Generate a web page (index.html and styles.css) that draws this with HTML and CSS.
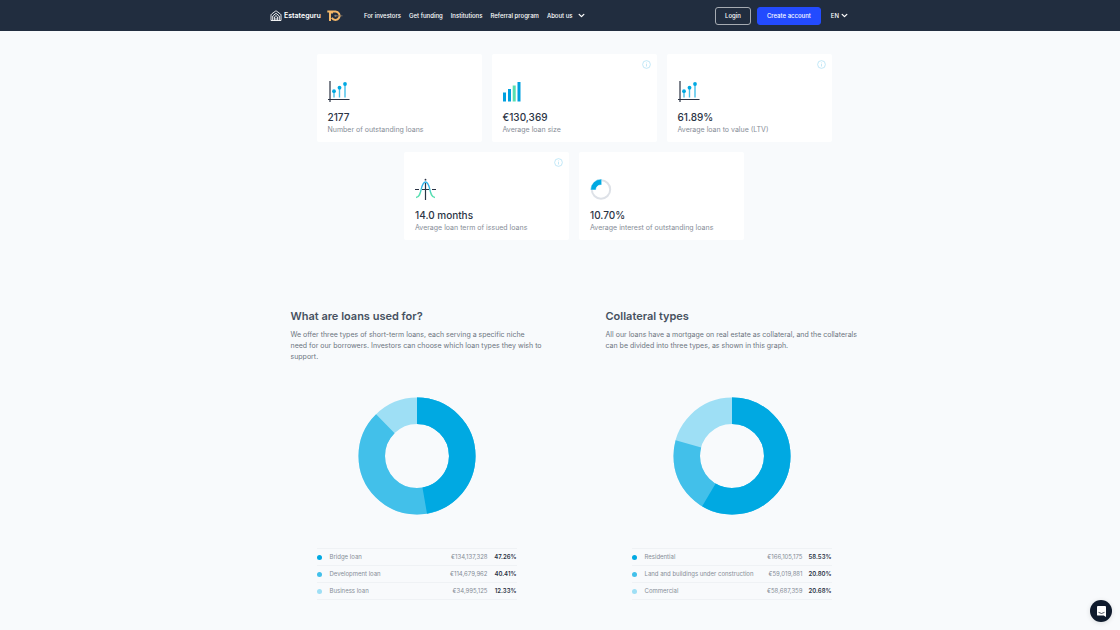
FILE: index.html
```html
<!DOCTYPE html>
<html lang="en">
<head>
<meta charset="utf-8">
<meta name="viewport" content="width=device-width, initial-scale=1">
<title>Estateguru statistics</title>
<link rel="stylesheet" href="styles.css">
</head>
<body>
<svg class="defs" aria-hidden="true">
  <symbol id="chevron" viewBox="0 0 6 6"><path d="M1 2 3 4 5 2" fill="none" stroke="currentColor" stroke-width="1.1" stroke-linecap="round" stroke-linejoin="round"/></symbol>
  <symbol id="info" viewBox="0 0 10 10"><g fill="none" stroke="#b5e3f5" stroke-width=".9"><circle cx="5" cy="5" r="4.3"/><path d="M5 4.500V7.200M5 2.800v.9"/></g></symbol>
  <symbol id="pins" viewBox="0 0 22 22"><path d="M2 1v21M0 19.500h21.500" stroke="#2b3445" stroke-width="1.200"/><path d="M6 12v5.500M11.500 8v9.500M17 5v12.500" stroke="#45c1ea" stroke-width="1.400"/><g fill="#00a9e2"><circle cx="6" cy="11.200" r="1.900"/><circle cx="11.500" cy="7.700" r="1.900"/><circle cx="17" cy="4" r="1.900"/></g></symbol>
</svg>
<header class="header">
  <div class="header-inner">
    <a class="brand" href="#" aria-label="Estateguru">
      <svg class="brand-house" viewBox="0 0 12 12"><g fill="none" stroke="#fff" stroke-width=".9" stroke-linejoin="round"><path d="M1 10.500V5.200Q1 4.500 1.600 4L5.400 1.200Q6 .8 6.600 1.200L10.400 4Q11 4.500 11 5.200V10.500Z"/><path d="M2.700 10.500V6L6 3.300 9.300 6V10.500M4.400 10.500V7L6 5.600 7.600 7v3.500M6 7.800V10.500"/></g></svg>
      <span>Estateguru</span>
      <svg class="brand-ten" viewBox="0 0 16 12"><g fill="none" stroke="#f5b869" stroke-width="2"><path d="M.3 1.500H3V11"/><path d="M5 3.400V1.500H8.500A4.200 4.200 0 1 1 4.800 7.800"/></g><path d="M7.500 5.800H15.500" stroke="#8b7a69" stroke-width=".8"/><circle cx="8.500" cy="5.800" r="1.100" fill="#8b7a69"/></svg>
    </a>
    <nav class="nav">
      <a href="#">For investors</a>
      <a href="#">Get funding</a>
      <a href="#">Institutions</a>
      <a href="#">Referral program</a>
      <a href="#">About us <svg class="chevron"><use href="#chevron"/></svg></a>
    </nav>
    <div class="account">
      <button class="button" type="button">Login</button>
      <button class="button button-primary" type="button">Create account</button>
      <button class="language" type="button">EN <svg class="chevron"><use href="#chevron"/></svg></button>
    </div>
  </div>
</header>

<main class="main">
  <section class="stats" aria-label="Key figures">
    <article class="card">
      <svg class="card-icon"><use href="#pins"/></svg>
      <strong class="card-value">2177</strong>
      <span class="card-label">Number of outstanding loans</span>
    </article>
    <article class="card">
      <button class="info" type="button" aria-label="More information"><svg><use href="#info"/></svg></button>
      <svg class="card-icon" viewBox="0 0 22 22"><path d="M0 12.500h3v9H0zM5 9h3v12.500H5zM14.500 2h3v19.500h-3z" fill="#00a0df"/><path d="M9.700 5.500h3v16h-3z" fill="#58dfb0"/></svg>
      <strong class="card-value">€130,369</strong>
      <span class="card-label">Average loan size</span>
    </article>
    <article class="card">
      <button class="info" type="button" aria-label="More information"><svg><use href="#info"/></svg></button>
      <svg class="card-icon"><use href="#pins"/></svg>
      <strong class="card-value">61.89%</strong>
      <span class="card-label">Average loan to value (LTV)</span>
    </article>
    <article class="card">
      <button class="info" type="button" aria-label="More information"><svg><use href="#info"/></svg></button>
      <svg class="card-icon" viewBox="0 0 22 22"><defs><linearGradient id="bell" x1="0" y1="0" x2="0" y2="1"><stop offset=".3" stop-color="#2fb2e8"/><stop offset=".75" stop-color="#58dfb0"/></linearGradient></defs><path d="M0 11.500h4M7 11.500h7M17 11.500h4M10.500 5v17" stroke="#2b3445" stroke-width="1.200"/><circle cx="10.500" cy="1.700" r=".9" fill="#2b3445"/><path d="M1 19.500C7.500 19.500 5 4 10.500 4S13.500 19.500 20 19.500" fill="none" stroke="url(#bell)" stroke-width="1.300"/></svg>
      <strong class="card-value">14.0 months</strong>
      <span class="card-label">Average loan term of issued loans</span>
    </article>
    <article class="card">
      <svg class="card-icon" viewBox="0 0 22 22"><circle cx="11" cy="11.500" r="9.200" fill="none" stroke="#dde1e7" stroke-width="2"/><path d="M.6 12V11.500A10.400 10.400 0 0 1 11 1.100h.7V7H11a4.600 4.600 0 0 0-5 5Z" fill="#00a9e2" stroke="#fff" stroke-width=".5"/></svg>
      <strong class="card-value">10.70%</strong>
      <span class="card-label">Average interest of outstanding loans</span>
    </article>
  </section>

  <div class="charts">
    <section class="chart">
      <h2>What are loans used for?</h2>
      <p>We offer three types of short-term loans, each serving a specific niche need&nbsp;for our borrowers. Investors can choose which loan types they wish to support.</p>
      <svg class="donut" viewBox="0 0 118 118" role="img" aria-label="Loans by purpose"><g fill="none" stroke-width="26.500" transform="rotate(-90 59 59)"><circle cx="59" cy="59" r="45.250" pathLength="100" stroke="#9edff5"/><circle cx="59" cy="59" r="45.250" pathLength="100" stroke="#42c0ea" stroke-dasharray="87.670 100"/><circle cx="59" cy="59" r="45.250" pathLength="100" stroke="#00a9e2" stroke-dasharray="47.260 100"/></g></svg>
      <table class="legend">
        <tr><td><i class="dot dot-dark"></i></td><th scope="row">Bridge loan</th><td>€134,137,328</td><td>47.26%</td></tr>
        <tr><td><i class="dot dot-mid"></i></td><th scope="row">Development loan</th><td>€114,679,962</td><td>40.41%</td></tr>
        <tr><td><i class="dot dot-light"></i></td><th scope="row">Business loan</th><td>€34,995,125</td><td>12.33%</td></tr>
      </table>
    </section>
    <section class="chart">
      <h2>Collateral types</h2>
      <p>All our loans have a mortgage on real estate as collateral, and the collaterals can be divided into three types, as shown in this graph.</p>
      <svg class="donut" viewBox="0 0 118 118" role="img" aria-label="Loans by collateral type"><g fill="none" stroke-width="26.500" transform="rotate(-90 59 59)"><circle cx="59" cy="59" r="45.250" pathLength="100" stroke="#9edff5"/><circle cx="59" cy="59" r="45.250" pathLength="100" stroke="#42c0ea" stroke-dasharray="79.330 100"/><circle cx="59" cy="59" r="45.250" pathLength="100" stroke="#00a9e2" stroke-dasharray="58.530 100"/></g></svg>
      <table class="legend">
        <tr><td><i class="dot dot-dark"></i></td><th scope="row">Residential</th><td>€166,105,175</td><td>58.53%</td></tr>
        <tr><td><i class="dot dot-mid"></i></td><th scope="row">Land and buildings under construction</th><td>€59,019,881</td><td>20.80%</td></tr>
        <tr><td><i class="dot dot-light"></i></td><th scope="row">Commercial</th><td>€58,687,359</td><td>20.68%</td></tr>
      </table>
    </section>
  </div>
</main>

<button class="chat" type="button" aria-label="Open chat"><svg viewBox="0 0 10 12"><path d="M1 0h8q1 0 1 1v11L7.500 10.500H1q-1 0-1-1V1Q0 0 1 0Z" fill="#fff"/><path d="M2 7.200Q5 9.500 8 7.200" fill="none" stroke="#0f1b2d" stroke-width=".8" stroke-linecap="round"/></svg></button>
</body>
</html>
```
FILE: styles.css
```css
* { box-sizing: border-box; }

body {
  margin: 0;
  background: #f8fafc;
  color: #6c757f;
  font: 6px/10px Inter, "Liberation Sans", sans-serif;
}

a { color: inherit; text-decoration: none; }
button { margin: 0; border: 0; padding: 0; background: none; color: inherit; font: inherit; cursor: pointer; }
svg { display: block; flex: none; }
.defs { position: absolute; width: 0; height: 0; }

.header { background: #212d3f; color: #fff; font-weight: 500; }
.header-inner { display: flex; align-items: center; max-width: 580px; height: 31px; margin: 0 auto; }
.brand { display: flex; align-items: center; gap: 2px; margin-right: 21px; font-size: 7px; font-weight: 600; }
.brand-house { width: 12px; height: 12px; }
.brand-ten { width: 16px; height: 12px; margin-left: 4px; }
.nav { display: flex; gap: 8px; }
.nav a, .language { display: flex; align-items: center; gap: 5px; white-space: nowrap; }
.chevron { width: 7px; height: 7px; }
.account { display: flex; align-items: center; gap: 6px; margin-left: auto; }
.button { height: 18px; padding: 0 9px; border: 1px solid #a6abb2; border-radius: 3px; }
.button-primary { border-color: #234bff; background: #234bff; }
.language { gap: 2px; margin: 0 2px 0 4px; }

.main { max-width: 595px; margin: 0 auto; padding: 23px 0 28px 28px; }

.stats { display: flex; flex-wrap: wrap; justify-content: center; gap: 10px; max-width: 516px; margin: 0 auto; }
.card {
  position: relative;
  display: flex;
  flex-direction: column;
  width: 165px;
  padding: 26px 11px 7px;
  border-radius: 2px;
  background: #fff;
}
.card-icon { width: 22px; height: 22px; }
.card-value { margin-top: 8px; color: #2b3445; font-size: 10px; font-weight: 500; line-height: 14px; }
.card-label { font-size: 7px; line-height: 11px; color: #868d97; }
.info { position: absolute; top: 6px; right: 6px; }
.info svg { width: 9px; height: 9px; }

.charts { display: grid; grid-template-columns: 1fr 1fr; gap: 63px; margin-top: 68px; }
.chart { display: flex; flex-direction: column; }
.chart h2 { margin: 0; color: #465160; font-size: 11px; font-weight: 600; line-height: 16px; }
.chart p { min-height: 33px; margin: 5px 0 35px; font-size: 7px; line-height: 11px; }
.donut { width: 118px; height: 118px; margin: 0 auto; }

.legend { margin: 33px 26px 0; border-collapse: collapse; color: #868d97; white-space: nowrap; }
.legend tr { height: 17px; border-top: 1px solid #eff2f5; border-bottom: 1px solid #eff2f5; }
.legend td, .legend th { padding: 0; font-weight: 400; text-align: left; }
.legend td:first-child { width: 13px; }
.legend td:nth-child(3) { text-align: right; }
.legend td:last-child { width: 29px; color: #2b3445; font-weight: 600; text-align: right; }
.dot { display: block; width: 5px; height: 5px; border-radius: 50%; }
.dot-dark { background: #00a9e2; }
.dot-mid { background: #42c0ea; }
.dot-light { background: #9edff5; }

.chat {
  position: fixed;
  right: 8px;
  bottom: 8px;
  display: grid;
  place-items: center;
  width: 22px;
  height: 22px;
  border-radius: 50%;
  background: #0f1b2d;
  box-shadow: 0 1px 5px #0000001f;
}
.chat svg { width: 9px; height: 11px; }
```
